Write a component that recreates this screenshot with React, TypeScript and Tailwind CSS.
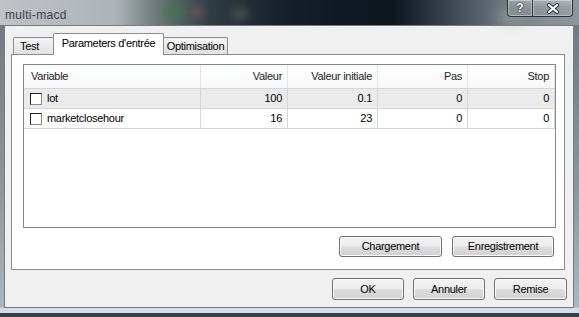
import React from 'react';

const cols = [
  { label: 'Variable', cell: 'w-[177px] justify-start pl-[7px]' },
  { label: 'Valeur', cell: 'w-[87px] justify-end pr-[5px]' },
  { label: 'Valeur initiale', cell: 'w-[90px] justify-end pr-[5px]' },
  { label: 'Pas', cell: 'w-[90px] justify-end pr-[5px]' },
  { label: 'Stop', cell: 'w-[87px] justify-end pr-[5px]' },
];

const rows = [
  { name: 'lot', vals: ['100', '0.1', '0', '0'], selected: true },
  { name: 'marketclosehour', vals: ['16', '23', '0', '0'], selected: false },
];

const Btn = ({ label, className }: { label: string; className: string }) => (
  <button
    className={`rounded-[3px] border border-[#707070] bg-[linear-gradient(180deg,#f3f3f3_0%,#ececec_48%,#dddddd_52%,#d0d0d0_100%)] shadow-[inset_0_0_0_1px_#fbfbfb] text-[11px] tracking-[-0.3px] text-black leading-none ${className}`}
  >
    {label}
  </button>
);

const Checkbox = () => (
  <div className="w-[12px] h-[12px] border border-[#1e1e1e] border-r-[#8a8a8a] border-b-[#8a8a8a] bg-white shrink-0" />
);

export default function App() {
  return (
    <div className="w-[579px] h-[317px] overflow-hidden flex flex-col font-['Liberation_Sans',Arial,sans-serif] bg-[linear-gradient(180deg,#6f767d_0%,#8d959d_60%,#aeb7bf_96.9%,#d3dde6_97.2%,#d3dde6_98.6%,#3a3e43_98.8%)]">
      {/* Title bar */}
      <div className="h-[25px] shrink-0 flex items-start relative bg-[linear-gradient(90deg,#bfc3c7_0%,#aeb3b8_20%,#6d7a78_27%,#2f3d45_36%,#141d28_50%,#0e1620_68%,#48525d_80%,#7d858e_90%,#8f969e_100%)]">
        <div className="absolute left-[165px] top-[2px] w-[20px] h-[18px] rounded-full bg-[#3f7a4a] blur-[5px] opacity-60" />
        <div className="absolute left-[190px] top-[6px] w-[14px] h-[12px] rounded-full bg-[#8a5a55] blur-[5px] opacity-60" />
        <div className="absolute left-[232px] top-[8px] w-[16px] h-[12px] rounded-full bg-[#7b6f5a] blur-[5px] opacity-50" />
        <div className="absolute left-[498px] top-[10px] w-[24px] h-[14px] rounded-full bg-[#9fb39a] blur-[6px] opacity-50" />
        <span className="relative pl-[5px] pt-[6px] text-[12px] tracking-[0.3px] text-[#3b3f44]">multi-macd</span>
        <div className="relative ml-auto mr-[6px] flex">
          <div className="w-[26px] h-[17px] flex items-center justify-center border border-t-0 border-[#2c3238] rounded-bl-[4px] bg-[linear-gradient(180deg,rgba(255,255,255,0.28),rgba(255,255,255,0.08)_50%,rgba(255,255,255,0.02))] shadow-[inset_0_0_0_1px_rgba(255,255,255,0.35)]">
            <span className="text-[12px] font-bold text-white leading-none [text-shadow:0_0_2px_#222,0_0_1px_#000]">?</span>
          </div>
          <div className="w-[41px] h-[17px] -ml-px flex items-center justify-center border border-t-0 border-[#2c3238] rounded-br-[4px] bg-[linear-gradient(180deg,rgba(255,255,255,0.3),rgba(255,255,255,0.1)_50%,rgba(255,255,255,0.05))] shadow-[inset_0_0_0_1px_rgba(255,255,255,0.35)]">
            <svg width="14" height="11" viewBox="0 0 14 11">
              <path d="M3 2 L11 9 M11 2 L3 9" stroke="#2a2f35" strokeWidth="4" strokeLinecap="round" />
              <path d="M3 2 L11 9 M11 2 L3 9" stroke="#ffffff" strokeWidth="2.2" strokeLinecap="round" />
            </svg>
          </div>
        </div>
      </div>

      {/* Window body */}
      <div className="flex-1 flex pl-[4px] pr-[6px] pb-[9px]">
        <div className="flex-1 flex flex-col bg-[#f0f0f0] border border-[#737c85] text-[11px] tracking-[-0.3px] text-black">
          {/* Tabs */}
          <div className="flex items-end h-[21px] mt-[7px] pl-[8px] relative z-10">
            <div className="w-[41px] h-[17px] border border-b-0 border-[#898c95] rounded-t-[2px] bg-[linear-gradient(180deg,#f4f4f4,#e1e1e1)] flex items-center pl-[6px] pt-[1px]">
              Test
            </div>
            <div className="w-[111px] h-[22px] -ml-px -mb-px border border-b-0 border-[#898c95] rounded-t-[2px] bg-white flex items-center justify-center pb-[2px]">
              Parameters d'entrée
            </div>
            <div className="w-[65px] h-[17px] -ml-px border border-b-0 border-[#898c95] rounded-t-[2px] bg-[linear-gradient(180deg,#f4f4f4,#e1e1e1)] flex items-center justify-center pt-[1px]">
              Optimisation
            </div>
          </div>

          {/* Tab panel */}
          <div className="ml-[6px] mr-[8px] h-[216px] border border-[#898c95] bg-white flex flex-col pl-[11px] pr-[8px] pt-[9px]">
            <div className="h-[164px] border border-[#828790] bg-white flex flex-col">
              <div className="h-[24px] flex border-b border-[#d5d5d5] bg-[linear-gradient(180deg,#ffffff,#f7f8fa)]">
                {cols.map((c) => (
                  <div key={c.label} className={`${c.cell} flex items-center border-r border-[#e3e4e6] text-[#1e1e1e]`}>
                    {c.label}
                  </div>
                ))}
              </div>
              {rows.map((r) => (
                <div key={r.name} className={`h-[20px] flex border-b border-[#d6d6d6] ${r.selected ? 'bg-[#ebebeb]' : 'bg-white'}`}>
                  <div className="w-[177px] flex items-center gap-[5px] pl-[6px] border-r border-[#d6d6d6]">
                    <Checkbox />
                    <span>{r.name}</span>
                  </div>
                  {r.vals.map((v, i) => (
                    <div key={i} className={`${cols[i + 1].cell} flex items-center border-r border-[#d6d6d6]`}>
                      {v}
                    </div>
                  ))}
                </div>
              ))}
            </div>
            <div className="flex justify-end gap-[10px] mt-[8px] pr-[2px]">
              <Btn label="Chargement" className="w-[103px] h-[21px]" />
              <Btn label="Enregistrement" className="w-[102px] h-[21px]" />
            </div>
          </div>

          {/* Bottom buttons */}
          <div className="flex justify-end gap-[9px] mt-[8px] mr-[6px]">
            <Btn label="OK" className="w-[72px] h-[22px]" />
            <Btn label="Annuler" className="w-[72px] h-[22px]" />
            <Btn label="Remise" className="w-[73px] h-[22px]" />
          </div>
        </div>
      </div>
    </div>
  );
}
